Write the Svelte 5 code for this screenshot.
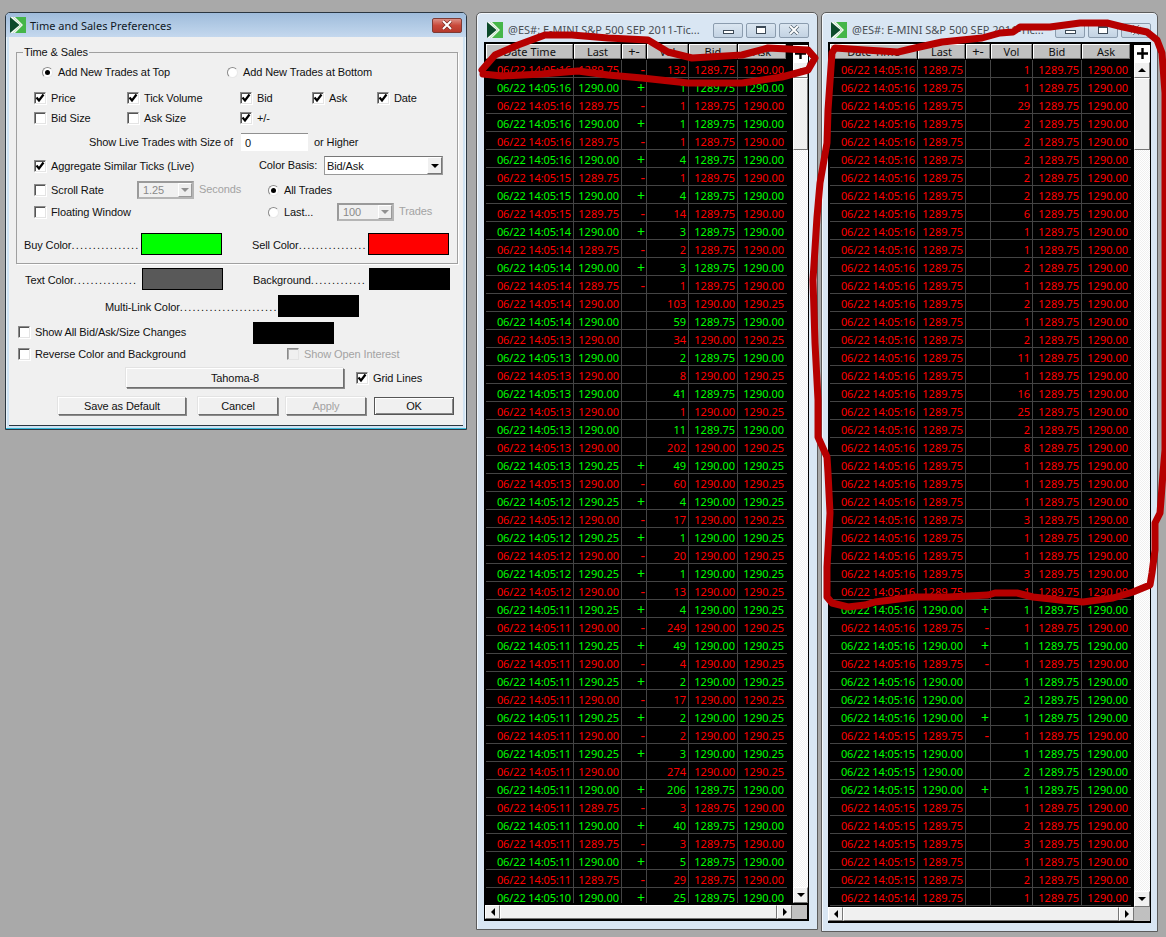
<script>
  const A = ['1289.75', '1290.00'];
  const B = ['1290.00', '1290.25'];
  const parse = (s) =>
    s.trim().split('\n').map((l) => {
      const [c, t, last, sign, vol, q] = l.trim().split(' ');
      return { c, t, last, sign: sign === '_' ? '' : sign, vol, q: q === 'A' ? A : B };
    });
  const left = parse(`
r 16 1289.75 - 132 A
g 16 1290.00 + 1 A
r 16 1289.75 - 1 A
g 16 1290.00 + 1 A
r 16 1289.75 - 1 A
g 16 1290.00 + 4 A
r 15 1289.75 - 1 A
g 15 1290.00 + 4 A
r 15 1289.75 - 14 A
g 14 1290.00 + 3 A
r 14 1289.75 - 2 A
g 14 1290.00 + 3 A
r 14 1289.75 - 1 A
r 14 1290.00 _ 103 B
g 14 1290.00 _ 59 A
r 13 1290.00 _ 34 B
g 13 1290.00 _ 2 A
r 13 1290.00 _ 8 B
g 13 1290.00 _ 41 A
r 13 1290.00 _ 1 B
g 13 1290.00 _ 11 A
r 13 1290.00 _ 202 B
g 13 1290.25 + 49 B
r 13 1290.00 - 60 B
g 12 1290.25 + 4 B
r 12 1290.00 - 17 B
g 12 1290.25 + 1 B
r 12 1290.00 - 20 B
g 12 1290.25 + 1 B
r 12 1290.00 - 13 B
g 11 1290.25 + 4 B
r 11 1290.00 - 249 B
g 11 1290.25 + 49 B
r 11 1290.00 - 4 B
g 11 1290.25 + 2 B
r 11 1290.00 - 17 B
g 11 1290.25 + 2 B
r 11 1290.00 - 2 B
g 11 1290.25 + 3 B
r 11 1290.00 _ 274 B
g 11 1290.00 + 206 A
r 11 1289.75 - 3 A
g 11 1290.00 + 40 A
r 11 1289.75 - 3 A
g 11 1290.00 + 5 A
r 11 1289.75 - 29 A
g 10 1290.00 + 25 A`);
  const topVols = [1, 1, 29, 2, 2, 2, 2, 2, 6, 1, 1, 2, 1, 2, 1, 2, 11, 1, 16, 25, 2, 8, 1, 1, 1, 3, 1, 1, 3, 1];
  const right = [
    ...topVols.map((v) => ({ c: 'r', t: '16', last: '1289.75', sign: '', vol: String(v), q: A })),
    ...parse(`
g 16 1290.00 + 1 A
r 16 1289.75 - 1 A
g 16 1290.00 + 1 A
r 16 1289.75 - 1 A
g 16 1290.00 _ 1 A
g 16 1290.00 _ 2 A
g 16 1290.00 + 1 A
r 15 1289.75 - 1 A
g 15 1290.00 _ 1 A
g 15 1290.00 _ 2 A
g 15 1290.00 + 1 A
r 15 1289.75 _ 1 A
r 15 1289.75 _ 2 A
r 15 1289.75 _ 3 A
r 15 1289.75 _ 1 A
r 15 1289.75 _ 2 A
r 14 1289.75 _ 1 A`)
  ];
  const windows = [
    { cls: 'w1', rows: left },
    { cls: 'w2', rows: right }
  ];
  const heads = ['Date Time', 'Last', '+-', 'Vol', 'Bid', 'Ask'];
  const poly = (p) => 'M' + p.map((a) => a.join(' ')).join('L');
  const scribble1 = poly([[482,70],[495,55],[518,45],[545,35],[572,35],[608,38],[648,40],[668,52],[692,58],[742,55],[768,48],[808,50],[815,58],[808,70],[782,77],[742,83],[688,83],[642,78],[608,75],[578,71],[542,74],[502,76],[483,74]]);
  const scribble2 = poly([[813,280],[817,217],[820,183],[827,143],[828,110],[832,53],[835,48],[865,50],[898,52],[915,48],[942,42],[982,38],[1000,33],[1013,32],[1020,27],[1050,27],[1080,23],[1107,23],[1123,27],[1147,32],[1157,40],[1162,53],[1165,93],[1165,450],[1163,473],[1161,500],[1160,513],[1155,523],[1155,550],[1152,573],[1150,585],[1133,592],[1113,598],[1083,602],[1060,600],[1033,597],[1017,593],[995,593],[988,595],[948,597],[915,597],[875,602],[865,605],[848,607],[832,603],[827,597],[827,567],[830,513],[828,473],[827,457],[818,437],[818,400],[815,343],[813,280]]);
</script>

{#snippet logo()}
  <svg class="logo" viewBox="0 0 16 16" width="16" height="16">
    <rect width="16" height="16" fill="#f4f8f4" />
    <polygon points="0,0 9.5,8 0,16" fill="#0b4a2a" />
    <polygon points="3,0 16,0 16,16 3,16 11,8" fill="#45b649" />
    <polygon points="3,0 11,8 3,16 5,16 13,8 5,0" fill="#eef5ee" />
  </svg>
{/snippet}

{#snippet check(label, on = false, off = false)}
  <span class="opt" class:off>
    <span class="box">
      {#if on}
        <svg viewBox="0 0 10 10" width="10" height="10"><path d="M1.5 4.5L4 7.5L8.5 1.5" fill="none" stroke="#000" stroke-width="2.2" /></svg>
      {/if}
    </span>
    <span>{label}</span>
  </span>
{/snippet}

{#snippet radio(label, on = false)}
  <span class="opt">
    <span class="radio" class:on></span>
    <span>{label}</span>
  </span>
{/snippet}

{#snippet combo(value)}
  <span class="combo">
    <span class="cval">{value}</span>
    <span class="cbtn"><i class="tri down dimtri"></i></span>
  </span>
{/snippet}

{#snippet dotted(name, count)}
  <span class="dots">{name}<span class="leader">{'.'.repeat(count)}</span></span>
{/snippet}

<div class="desk">
  <section class="dialog">
    <header class="dtitle">
      {@render logo()}
      <span class="dname">Time and Sales Preferences</span>
      <span class="dclose">
        <svg viewBox="0 0 12 10" width="12" height="10"><path d="M2 1L10 9M10 1L2 9" stroke="#7a2a20" stroke-width="3.4" /><path d="M2 1L10 9M10 1L2 9" stroke="#fff" stroke-width="2" /></svg>
      </span>
    </header>
    <div class="dbody">
      <fieldset>
        <legend>Time &amp; Sales</legend>
        <div class="fr r1">
          {@render radio('Add New Trades at Top', true)}
          {@render radio('Add New Trades at Bottom')}
        </div>
        <div class="fr r2">
          {@render check('Price', true)}
          {@render check('Tick Volume', true)}
          {@render check('Bid', true)}
          {@render check('Ask', true)}
          {@render check('Date', true)}
        </div>
        <div class="fr r2 mt2">
          {@render check('Bid Size')}
          {@render check('Ask Size')}
          {@render check('+/-', true)}
        </div>
        <div class="fr r4">
          <span class="livelabel">Show Live Trades with Size of</span>
          <span class="input">0</span>
          <span>or Higher</span>
        </div>
        <div class="fr r5">
          {@render check('Aggregate Similar Ticks (Live)', true)}
          <span class="up2">Color Basis:</span>
          <span class="select">Bid/Ask<span class="sbtn"><i class="tri down"></i></span></span>
        </div>
        <div class="fr r6">
          {@render check('Scroll Rate')}
          <span class="withunit">{@render combo('1.25')}<span class="dim up2">Seconds</span></span>
          {@render radio('All Trades', true)}
        </div>
        <div class="fr r7">
          {@render check('Floating Window')}
          <span></span>
          {@render radio('Last...')}
          <span class="withunit">{@render combo('100')}<span class="dim up2">Trades</span></span>
        </div>
        <div class="colors inset">
          {@render dotted('Buy Color', 16)}
          <span class="sw green"></span>
          {@render dotted('Sell Color', 16)}
          <span class="sw red"></span>
        </div>
      </fieldset>
      <div class="colors outer">
        {@render dotted('Text Color', 15)}
        <span class="sw grey"></span>
        {@render dotted('Background', 13)}
        <span class="sw black"></span>
      </div>
      <div class="mlink">
        {@render dotted('Multi-Link Color', 23)}
        <span class="sw black"></span>
      </div>
      <div class="showall">
        {@render check('Show All Bid/Ask/Size Changes')}
        <span class="sw black"></span>
      </div>
      <div class="reverse">
        {@render check('Reverse Color and Background')}
        {@render check('Show Open Interest', false, true)}
      </div>
      <div class="fontrow">
        <span class="btn wide">Tahoma-8</span>
        {@render check('Grid Lines', true)}
      </div>
      <div class="actions">
        <span class="btn save">Save as Default</span>
        <span class="btn">Cancel</span>
        <span class="btn off">Apply</span>
        <span class="btn def">OK</span>
      </div>
    </div>
  </section>

  {#each windows as w}
    <section class="ts {w.cls}">
      <header class="tstitle">
        {@render logo()}
        <span class="tsname">@ES#: E-MINI S&amp;P 500 SEP 2011-Tic...</span>
        <span class="wbtn"><i class="g-min"></i></span>
        <span class="wbtn"><i class="g-max"></i></span>
        <span class="wbtn">
          <svg viewBox="0 0 12 10" width="12" height="10"><path d="M2 1L10 9M10 1L2 9" stroke="#50606e" stroke-width="3.4" /><path d="M2 1L10 9M10 1L2 9" stroke="#fff" stroke-width="2" /></svg>
        </span>
      </header>
      <div class="frame">
        <div class="main">
          <div class="table">
            <div class="row head">
              {#each heads as h}<span class="th">{h}</span>{/each}
            </div>
            {#each w.rows as r}
              <div class="row c-{r.c}">
                <span class="when">06/22 14:05:{r.t}</span>
                <span>{r.last}</span>
                <span class="sign">{r.sign}</span>
                <span>{r.vol}</span>
                <span>{r.q[0]}</span>
                <span>{r.q[1]}</span>
              </div>
            {/each}
          </div>
          <div class="vbar">
            <span class="plus">
              <svg viewBox="0 0 13 13" width="13" height="13"><path d="M6.5 1V12M1 6.5H12" stroke="#000" stroke-width="2.4" /></svg>
            </span>
            <span class="sb"><i class="tri up"></i></span>
            <span class="thumb"></span>
            <span class="track"></span>
            <span class="sb"><i class="tri down"></i></span>
          </div>
        </div>
        <div class="hbar">
          <span class="sb hb"><i class="tri lt"></i></span>
          <span class="htrack"></span>
          <span class="sb hb"><i class="tri rt"></i></span>
          <span class="corner"></span>
        </div>
      </div>
    </section>
  {/each}

  <svg class="marker" width="1166" height="937" viewBox="0 0 1166 937">
    <path d={scribble1} />
    <path d={scribble2} />
  </svg>
</div>

<style>
  :global(body) {
    margin: 0;
    background: #a9a9a9;
  }
  .desk {
    position: relative;
    width: 1166px;
    height: 937px;
    overflow: hidden;
    background: #a9a9a9;
    font: 11px/14px "Noto Sans", "Liberation Sans", sans-serif;
    color: #111;
  }
  .marker {
    position: absolute;
    inset: 0;
    pointer-events: none;
  }
  .marker path {
    fill: none;
    stroke: #b60000;
    stroke-width: 7;
    stroke-linejoin: round;
    stroke-linecap: round;
  }
  .logo {
    flex: none;
  }

  /* dialog */
  .dialog {
    position: absolute;
    left: 5px;
    top: 12px;
    width: 462px;
    height: 418px;
    box-sizing: border-box;
    border: 1px solid #2b3640;
    border-radius: 5px 5px 0 0;
    background: #cfe3f3;
    box-shadow: inset 0 -1px 0 #37b7d8, inset 1px 0 0 #eaf4fb, inset -1px 0 0 #eaf4fb;
    display: flex;
    flex-direction: column;
  }
  .dtitle {
    height: 24px;
    display: flex;
    align-items: center;
    padding: 0 4px 0 4px;
    background: linear-gradient(#9fbcdb, #c4d8ee);
    border-radius: 4px 4px 0 0;
    flex: none;
  }
  .dname {
    flex: 1;
    margin: 2px 0 0 4px;
    color: #10181f;
  }
  .dclose {
    width: 30px;
    height: 15px;
    box-sizing: border-box;
    border: 1px solid #7d3a34;
    border-radius: 2px;
    background: linear-gradient(#dc8f85, #c9493a 50%, #b5392c);
    display: flex;
    align-items: center;
    justify-content: center;
  }
  .dbody {
    margin: 0 3px 3px;
    flex: 1;
    background: #f0f0f0;
    padding: 8px 6px 0 7px;
    border-bottom: 1px solid #2b3640;
    font-family: "Liberation Sans", "Noto Sans", sans-serif;
    letter-spacing: -0.1px;
  }
  fieldset {
    margin: 0;
    padding: 0 17px 6px 17px;
    width: 442px;
    height: 219px;
    box-sizing: border-box;
    border: 1px solid #a0a0a0;
    box-shadow: 1px 1px 0 #fff;
    min-inline-size: 0;
  }
  legend {
    margin-left: -11px;
    padding: 0 1px;
    line-height: 14px;
  }
  .fr {
    height: 18px;
    display: grid;
    align-items: center;
    white-space: nowrap;
  }
  .r1 {
    margin-top: 4px;
    padding-left: 8px;
    grid-template-columns: 185px auto;
  }
  .r2 {
    margin-top: 8px;
    grid-template-columns: 93px 113px 72px 65px auto;
  }
  .r2.mt2 {
    margin-top: 2px;
  }
  .r4 {
    margin-top: 6px;
    padding-left: 55px;
    display: flex;
  }
  .livelabel {
    width: 152px;
  }
  .input {
    width: 67px;
    height: 18px;
    box-sizing: border-box;
    background: #fff;
    border-top: 1px solid #909090;
    padding: 2px 0 0 4px;
    margin-right: 6px;
  }
  .r5 {
    margin-top: 6px;
    grid-template-columns: 225px 65px 119px;
  }
  .up2 {
    margin-top: -3px;
  }
  .select {
    position: relative;
    height: 19px;
    box-sizing: border-box;
    background: #fff;
    border: 1px solid #999;
    border-top-color: #777;
    padding: 2px 0 0 2px;
    margin-top: -1px;
  }
  .sbtn {
    position: absolute;
    right: 0;
    top: 0;
    bottom: 0;
    width: 15px;
    background: #f0f0f0;
    border: 1px solid;
    border-color: #fff #777 #777 #fff;
    box-sizing: border-box;
    display: flex;
    align-items: center;
    justify-content: center;
  }
  .r6 {
    margin-top: 6px;
    grid-template-columns: 103px 131px auto;
  }
  .r7 {
    margin-top: 4px;
    grid-template-columns: 103px 131px 69px auto;
  }
  .withunit {
    display: flex;
    align-items: center;
    gap: 5px;
  }
  .dim {
    color: #a3a3a3;
  }
  .combo {
    width: 57px;
    height: 18px;
    box-sizing: border-box;
    display: flex;
    border: 2px solid #9a9a9a;
    border-right-color: #b5b5b5;
    border-bottom-color: #b5b5b5;
    background: #f0f0f0;
    color: #8a8a8a;
  }
  .cval {
    flex: 1;
    padding: 0 0 0 4px;
    line-height: 14px;
  }
  .cbtn {
    width: 14px;
    background: #eee;
    border: 1px solid;
    border-color: #fff #999 #999 #fff;
    box-sizing: border-box;
    display: flex;
    align-items: center;
    justify-content: center;
  }
  .opt {
    display: flex;
    align-items: center;
    gap: 5px;
    white-space: nowrap;
  }
  .opt.off {
    color: #a3a3a3;
  }
  .box {
    width: 12px;
    height: 12px;
    box-sizing: border-box;
    flex: none;
    background: #fff;
    border: 1px solid;
    border-color: #8a8a8a #e4e4e4 #e4e4e4 #8a8a8a;
    box-shadow: inset 1px 1px 0 #555, 1px 1px 0 #fff;
    display: flex;
    align-items: center;
    justify-content: center;
  }
  .opt.off .box {
    background: #f0f0f0;
    box-shadow: inset 1px 1px 0 #aaa;
  }
  .radio {
    width: 11px;
    height: 11px;
    flex: none;
    box-sizing: border-box;
    border-radius: 50%;
    background: #fff;
    border: 1px solid #8a8a8a;
    border-right-color: #e8e8e8;
    border-bottom-color: #e8e8e8;
    display: flex;
    align-items: center;
    justify-content: center;
  }
  .radio.on::after {
    content: "";
    width: 5px;
    height: 5px;
    border-radius: 50%;
    background: #000;
  }
  .colors {
    display: grid;
    height: 22px;
    align-items: center;
    grid-template-columns: 117px 81px 30px 116px 81px;
  }
  .colors > :nth-child(3) {
    grid-column: 4;
  }
  .inset {
    margin: 12px 0 0 -10px;
  }
  .outer {
    margin: 4px 0 0 9px;
  }
  .dots {
    white-space: nowrap;
    padding-top: 2px;
  }
  .leader {
    letter-spacing: 1.2px;
  }
  .sw {
    height: 22px;
    box-sizing: border-box;
    border: 1px solid #000;
  }
  .green { background: #00ff00; }
  .red { background: #ff0000; }
  .grey { background: #595959; }
  .black { background: #000; }
  .mlink {
    margin: 5px 0 0 89px;
    display: grid;
    grid-template-columns: 173px 81px;
    height: 22px;
    align-items: center;
  }
  .showall {
    margin: 5px 0 0 2px;
    display: grid;
    grid-template-columns: 235px 81px;
    height: 22px;
    align-items: center;
  }
  .showall .opt {
    margin-top: -2px;
  }
  .reverse {
    margin: 1px 0 0 2px;
    display: grid;
    grid-template-columns: 269px auto;
    height: 18px;
    align-items: center;
  }
  .fontrow {
    margin: 5px 0 0 110px;
    display: grid;
    grid-template-columns: 218px auto;
    column-gap: 12px;
    height: 20px;
    align-items: center;
  }
  .btn {
    height: 18px;
    box-sizing: border-box;
    border: 1px solid;
    border-color: #fff #6f6f6f #6f6f6f #fff;
    box-shadow: 1px 1px 0 #8a8a8a, -1px -1px 0 #e3e3e3;
    background: #f0f0f0;
    display: flex;
    align-items: center;
    justify-content: center;
  }
  .btn.wide {
    height: 20px;
  }
  .btn.off {
    color: #a3a3a3;
  }
  .btn.def {
    border-color: #555;
    box-shadow: inset 1px 1px 0 #fff, inset -1px -1px 0 #888;
  }
  .actions {
    margin: 9px 0 0 42px;
    display: grid;
    grid-template-columns: 132px 80px 80px 80px;
    column-gap: 8px;
  }
  .btn.save {
    margin-right: 4px;
  }

  /* time and sales windows */
  .ts {
    position: absolute;
    top: 12px;
    box-sizing: border-box;
    border: 1px solid #5c5c5c;
    border-radius: 5px 5px 0 0;
    background: #d9e6f3;
    box-shadow: inset 1px 1px 0 #f2f7fc;
    display: flex;
    flex-direction: column;
  }
  .w1 {
    left: 476px;
    width: 342px;
    height: 918px;
    padding: 0 8px 0 7px;
  }
  .w2 {
    left: 821px;
    width: 337px;
    height: 920px;
    padding: 0 6px 0 6px;
  }
  .tstitle {
    height: 29px;
    display: flex;
    align-items: center;
    flex: none;
    padding: 5px 0 0 3px;
    box-sizing: border-box;
    gap: 3px;
  }
  .tsname {
    flex: 1;
    min-width: 0;
    margin-left: 2px;
    color: #4a4f55;
    white-space: nowrap;
    overflow: hidden;
  }
  .wbtn {
    width: 30px;
    height: 15px;
    box-sizing: border-box;
    border: 1px solid #8b9cae;
    border-radius: 2px;
    background: linear-gradient(#dbe6f1, #c3d3e3);
    display: flex;
    align-items: center;
    justify-content: center;
  }
  .g-min {
    margin-top: 4px;
    width: 9px;
    height: 2px;
    border: 1px solid #3d4a57;
    background: #fff;
  }
  .g-max {
    width: 8px;
    height: 5px;
    border: 1px solid #3d4a57;
    border-top-width: 2px;
    background: #fff;
  }
  .frame {
    flex: 1;
    min-height: 0;
    background: #000;
    display: flex;
    flex-direction: column;
    margin-bottom: 8px;
    padding-top: 2px;
  }
  .main {
    flex: 1;
    min-height: 0;
    display: flex;
  }
  .table {
    width: 303px;
    padding-left: 2px;
    box-sizing: border-box;
    overflow: hidden;
    flex: none;
  }
  .row {
    display: grid;
    grid-template-columns: 88px 48px 25px 42px 49px 49px;
    height: 18px;
    box-sizing: border-box;
    white-space: nowrap;
  }
  .row > span {
    border-right: 1px solid #444;
    border-bottom: 1px solid #444;
    text-align: right;
    padding: 3px 2px 0 0;
    line-height: 13px;
  }
  .row > span:last-child {
    border-right: 0;
    padding-right: 3px;
  }
  .row > .when {
    letter-spacing: -0.12px;
  }
  .row > .sign {
    font-size: 14px;
    padding-right: 1px;
  }
  .c-r {
    color: #ff0000;
  }
  .c-g {
    color: #00ff00;
  }
  .row.head {
    height: 16px;
  }
  .row > .th {
    box-sizing: border-box;
    background: #c0c0c0;
    color: #111;
    text-align: center;
    padding: 0;
    line-height: 13px;
    height: 15px;
    border: 1px solid;
    border-color: #fff #777 #777 #fff;
    margin-right: 1px;
  }
  .row > .th:nth-child(3) {
    font-size: 13px;
  }
  .row > .th:last-child {
    padding: 0;
    border-right: 1px solid #777;
  }
  .vbar {
    flex: none;
    display: flex;
    flex-direction: column;
    width: 16px;
  }
  .w1 .vbar {
    margin-left: 6px;
    width: 15px;
  }
  .w2 .vbar {
    margin-left: 3px;
  }
  .plus {
    height: 17px;
    margin-top: 1px;
    display: flex;
    align-items: center;
    justify-content: center;
    background: #fff;
    flex: none;
  }
  .sb {
    height: 16px;
    flex: none;
    box-sizing: border-box;
    background: #f0f0f0;
    border: 1px solid;
    border-color: #fff #777 #777 #fff;
    display: flex;
    align-items: center;
    justify-content: center;
  }
  .thumb {
    height: 72px;
    flex: none;
    box-sizing: border-box;
    background: #f0f0f0;
    border: 1px solid;
    border-color: #fff #777 #777 #fff;
  }
  .track {
    flex: 1;
    background: repeating-conic-gradient(#ffffff 0 25%, #f0f0f0 0 50%) 0 0 / 2px 2px;
  }
  .hbar {
    flex: none;
    height: 14px;
    display: flex;
    margin: 2px 2px 2px 1px;
  }
  .w2 .hbar {
    margin: 0 1px 2px 0;
  }
  .sb.hb {
    width: 15px;
    height: 100%;
  }
  .htrack {
    flex: 1;
    box-sizing: border-box;
    background: #f0f0f0;
    border: 1px solid;
    border-color: #fff #777 #777 #fff;
  }
  .corner {
    width: 15px;
    background: #c0c0c0;
  }
  .w2 .corner {
    width: 16px;
  }
  .tri {
    width: 0;
    height: 0;
    border: 4px solid transparent;
    display: block;
  }
  .tri.down {
    border-top-color: #000;
    border-bottom-width: 0;
  }
  .tri.up {
    border-bottom-color: #000;
    border-top-width: 0;
  }
  .tri.lt {
    border-right-color: #000;
    border-left-width: 0;
  }
  .tri.rt {
    border-left-color: #000;
    border-right-width: 0;
  }
  .tri.dimtri {
    border-top-color: #909090;
  }
</style>
